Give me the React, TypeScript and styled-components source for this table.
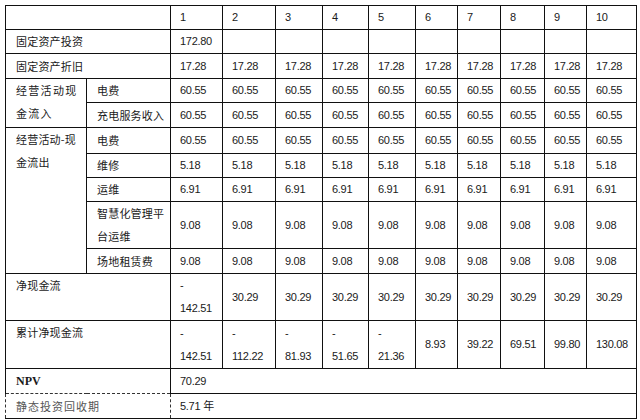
import React from 'react';
import styled, { createGlobalStyle } from 'styled-components';

const GlobalStyle = createGlobalStyle`
  html, body {
    margin: 0;
    padding: 0;
    background: #fff;
  }
  body {
    padding: 5px 0 0 5px;
    font-family: 'Liberation Sans', 'Noto Sans CJK SC', sans-serif;
    color: #1a1a1a;
  }
`;

const Sheet = styled.table`
  width: 631px;
  table-layout: fixed;
  border-collapse: collapse;
`;

const Row = styled.tr<{ $h: number }>`
  height: ${(p) => p.$h}px;
`;

type Edge = 'top' | 'left' | 'right' | 'bottom';

const Cell = styled.td<{ $top?: boolean; $dash?: Edge[] }>`
  border: 1px solid #111;
  padding: 0 4px 0 9px;
  font-size: 11px;
  line-height: 23px;
  letter-spacing: -0.3px;
  white-space: nowrap;
  vertical-align: ${(p) => (p.$top ? 'top' : 'middle')};
  text-align: left;
  ${(p) => (p.$dash || []).map((e) => `border-${e}: 1px dashed #333;`).join('\n')}
`;

const Label = styled(Cell)<{ $spread?: boolean }>`
  font-family: 'Noto Sans CJK SC', 'Liberation Serif', serif;
  font-size: 11px;
  letter-spacing: ${(p) => (p.$spread ? '1.3px' : '0.2px')};
  padding-left: 10px;
`;

const NpvLabel = styled(Cell)`
  font-family: 'Liberation Serif', serif;
  font-weight: bold;
  font-size: 12px;
  letter-spacing: 0;
  padding-left: 10px;
`;

const Faded = styled.span`
  color: #555;
  letter-spacing: 1px;
`;

const Unit = styled.span`
  font-family: 'Noto Sans CJK SC', sans-serif;
  margin-left: 3px;
`;

const widths = [81, 84, 52, 53, 47, 46, 47, 42, 43, 44, 42, 50];
const years = ['1', '2', '3', '4', '5', '6', '7', '8', '9', '10'];
const same = (v: string) => years.map(() => v);

const Num = ({ v }: { v: string }) =>
  v.startsWith('-') ? (
    <>
      -
      <br />
      {v.slice(1)}
    </>
  ) : (
    <>{v}</>
  );

const Values = ({ list }: { list: string[] }) => (
  <>
    {list.map((v, i) => (
      <Cell key={i}>
        <Num v={v} />
      </Cell>
    ))}
  </>
);

const App = () => {
  const invest = ['172.80', '', '', '', '', '', '', '', '', ''];
  const net = ['-142.51', ...Array(9).fill('30.29')];
  const total = ['-142.51', '-112.22', '-81.93', '-51.65', '-21.36', '8.93', '39.22', '69.51', '99.80', '130.08'];

  return (
    <>
      <GlobalStyle />
      <Sheet>
        <colgroup>
          {widths.map((w, i) => (
            <col key={i} style={{ width: w }} />
          ))}
        </colgroup>
        <tbody>
          <Row $h={24}>
            <Cell colSpan={2} />
            <Values list={years} />
          </Row>
          <Row $h={24}>
            <Label colSpan={2}>固定资产投资</Label>
            <Values list={invest} />
          </Row>
          <Row $h={25}>
            <Label colSpan={2}>固定资产折旧</Label>
            <Values list={same('17.28')} />
          </Row>
          <Row $h={24}>
            <Label rowSpan={2} $top $spread>
              经营活动现
              <br />
              金流入
            </Label>
            <Label>电费</Label>
            <Values list={same('60.55')} />
          </Row>
          <Row $h={25}>
            <Label>充电服务收入</Label>
            <Values list={same('60.55')} />
          </Row>
          <Row $h={26}>
            <Label rowSpan={5} $top>
              经营活动-现
              <br />
              金流出
            </Label>
            <Label>电费</Label>
            <Values list={same('60.55')} />
          </Row>
          <Row $h={24}>
            <Label>维修</Label>
            <Values list={same('5.18')} />
          </Row>
          <Row $h={24}>
            <Label>运维</Label>
            <Values list={same('6.91')} />
          </Row>
          <Row $h={47}>
            <Label>
              智慧化管理平
              <br />
              台运维
            </Label>
            <Values list={same('9.08')} />
          </Row>
          <Row $h={25}>
            <Label>场地租赁费</Label>
            <Values list={same('9.08')} />
          </Row>
          <Row $h={47}>
            <Label colSpan={2} $top>
              净现金流
            </Label>
            <Values list={net} />
          </Row>
          <Row $h={48}>
            <Label colSpan={2} $top>
              累计净现金流
            </Label>
            <Values list={total} />
          </Row>
          <Row $h={25}>
            <NpvLabel colSpan={2} $dash={['bottom']}>
              NPV
            </NpvLabel>
            <Cell colSpan={10}>70.29</Cell>
          </Row>
          <Row $h={22}>
            <Label colSpan={2} $dash={['top', 'left', 'right']}>
              <Faded>静态投资回收期</Faded>
            </Label>
            <Cell colSpan={10} $dash={['left']}>
              5.71<Unit>年</Unit>
            </Cell>
          </Row>
        </tbody>
      </Sheet>
    </>
  );
};

export default App;
